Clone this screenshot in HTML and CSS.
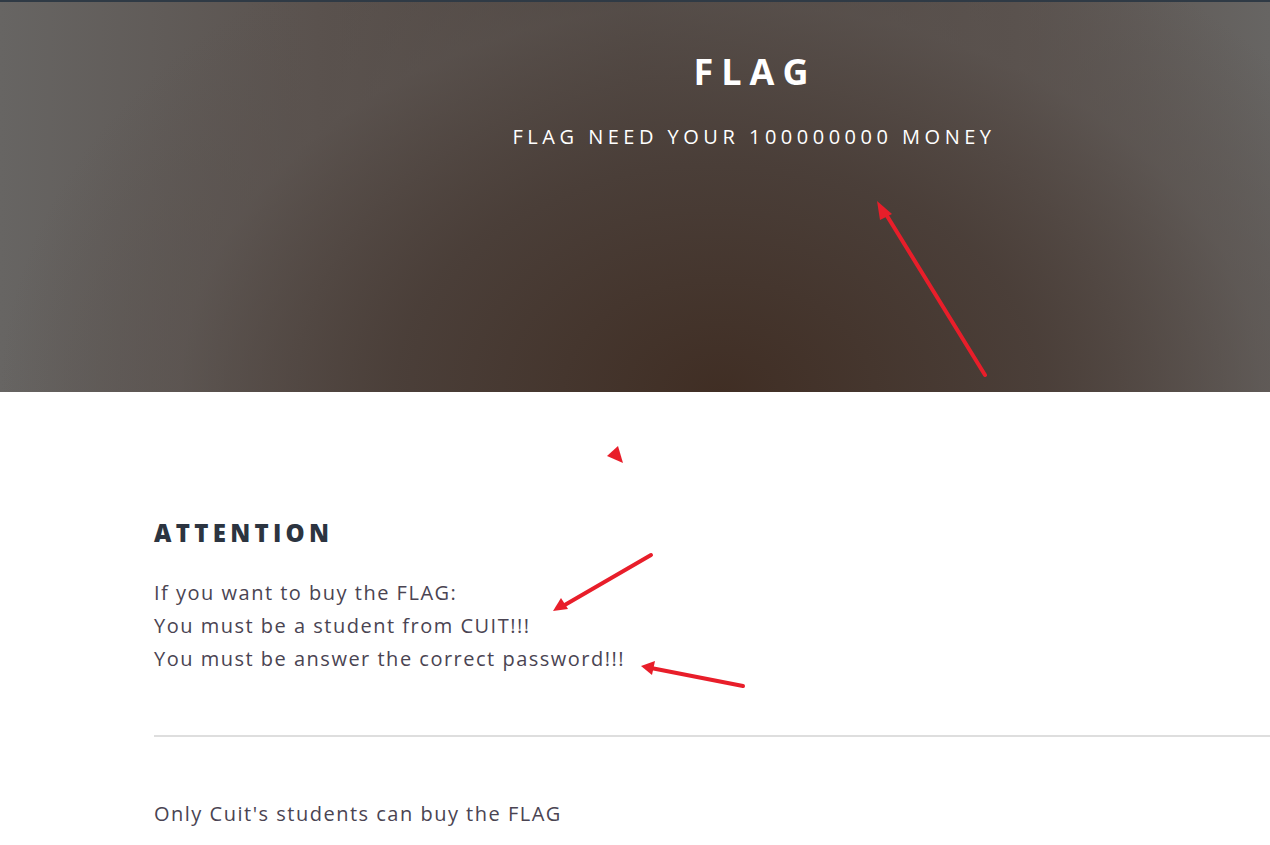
FILE: index.html
```html
<!DOCTYPE html>
<html lang="en">
<head>
<meta charset="utf-8">
<title>FLAG</title>
<link rel="stylesheet" href="styles.css">
</head>
<body>
<header class="masthead">
  <div class="masthead-inner">
    <h1 class="site-title">FLAG</h1>
    <p class="site-subtitle">FLAG NEED YOUR 100000000 MONEY</p>
  </div>
</header>
<main class="content">
  <section class="notice">
    <h2 class="notice-title">ATTENTION</h2>
    <p class="notice-line">If you want to buy the FLAG:</p>
    <p class="notice-line">You must be a student from CUIT!!!</p>
    <p class="notice-line">You must be answer the correct password!!!</p>
  </section>
  <hr class="divider">
  <p class="footnote">Only Cuit's students can buy the FLAG</p>
</main>
<svg class="annotations" width="1270" height="845" viewBox="0 0 1270 845" aria-hidden="true">
  <g stroke="#e81e2a" stroke-width="4" stroke-linecap="round" fill="none">
    <line x1="985" y1="375" x2="884" y2="211"/>
    <line x1="651" y1="555" x2="563" y2="606"/>
    <line x1="743" y1="686" x2="651" y2="668"/>
  </g>
  <g fill="#e81e2a">
    <polygon points="877,201 892,214 880,220"/>
    <polygon points="607,456 618,446 623,463"/>
    <polygon points="553,611 561,598 568,609"/>
    <polygon points="641,666 655,661 652,675"/>
  </g>
</svg>
</body>
</html>
```
FILE: styles.css
```css
html, body {
  margin: 0;
  padding: 0;
}
body {
  font-family: "Open Sans", "Liberation Sans", sans-serif;
  background: #fff;
  position: relative;
  overflow: hidden;
  height: 845px;
}
.masthead {
  height: 392px;
  border-top: 2px solid #2f3a45;
  background:
    radial-gradient(ellipse 720px 520px at 720px 392px, rgba(64,46,36,1) 0%, rgba(74,62,56,0.95) 45%, rgba(90,82,78,0.6) 75%, rgba(103,101,99,0) 100%),
    linear-gradient(90deg, #676563 0%, #5a524e 25%, #4c433e 50%, #5a524e 80%, #676563 100%);
  box-sizing: border-box;
}
.masthead-inner {
  padding: 48px 0 0 234px;
  text-align: center;
  color: #fff;
}
.site-title {
  margin: 0;
  font-size: 36px;
  line-height: 43px;
  font-weight: 700;
  letter-spacing: 8px;
  padding-left: 6px;
}
.site-subtitle {
  margin: 30px 0 0;
  font-size: 20px;
  line-height: 28px;
  font-weight: 400;
  letter-spacing: 4.5px;
  padding-left: 4px;
}
.content {
  padding: 0 0 0 154px;
}
.notice {
  padding-top: 125px;
}
.notice-title {
  margin: 0 0 27px;
  font-size: 24px;
  line-height: 32px;
  font-weight: 800;
  letter-spacing: 4.3px;
  color: #2c3440;
}
.notice-line {
  margin: 0;
  font-size: 20px;
  line-height: 33px;
  letter-spacing: 1.5px;
  color: #4a4452;
}
.divider {
  margin: 60px 0 0;
  border: 0;
  height: 2px;
  background: #dedede;
}
.footnote {
  margin: 60px 0 0;
  font-size: 20px;
  line-height: 33px;
  letter-spacing: 1.5px;
  color: #4a4452;
}
.annotations {
  position: absolute;
  left: 0;
  top: 0;
  pointer-events: none;
}
```
